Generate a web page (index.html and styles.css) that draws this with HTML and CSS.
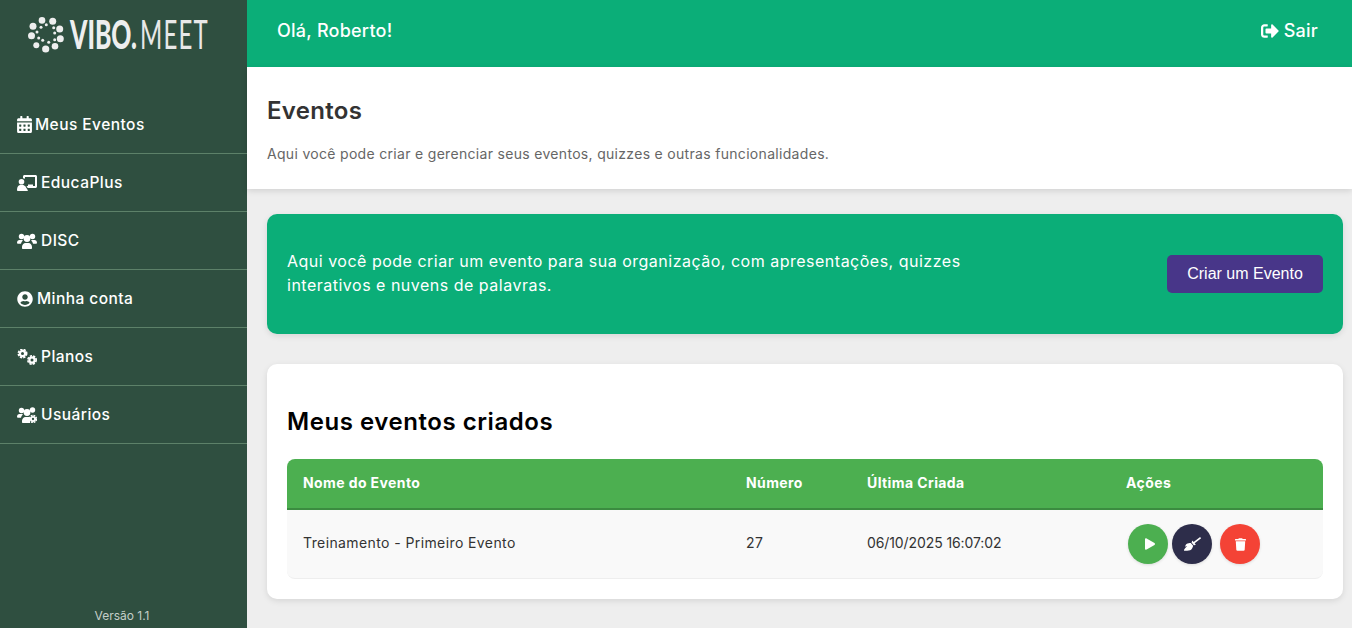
FILE: index.html
```html
<!DOCTYPE html>
<html lang="pt">
<head>
<meta charset="utf-8">
<title>Vibo Meet</title>
<link rel="stylesheet" href="styles.css">
</head>
<body>
<div class="app">
  <aside class="sidebar">
    <div class="logo">
      <svg class="logo-mark" viewBox="0 0 36 36" width="36" height="36" fill="#eeeeee">
        <circle cx="14" cy="3.400" r="3.300"/><circle cx="24.700" cy="4.300" r="3.500"/><circle cx="31.700" cy="12" r="3.500"/><circle cx="32.300" cy="21.700" r="3.500"/><circle cx="27" cy="29.300" r="3.300"/><circle cx="17.700" cy="32" r="3.600"/><circle cx="8.300" cy="28.300" r="3"/><circle cx="3.500" cy="18.700" r="3.500"/><circle cx="5" cy="9.300" r="3.500"/>
        <circle cx="18.300" cy="7.700" r="1.500"/><circle cx="25.700" cy="10.700" r="1.500"/><circle cx="26.700" cy="16" r="1.500"/><circle cx="26.700" cy="22.700" r="1.500"/><circle cx="20.700" cy="25.300" r="1.500"/><circle cx="14.700" cy="23.300" r="1.500"/><circle cx="10.700" cy="21" r="1.500"/><circle cx="9" cy="15" r="1.500"/><circle cx="13" cy="10.300" r="1.500"/>
      </svg>
      <svg class="logo-text" viewBox="0 0 142 36" width="142" height="36">
        <text class="logo-bold" transform="translate(0 32) scale(.62 1)">VIBO</text>
        <text class="logo-bold" transform="translate(61 32) scale(.62 1)">.</text>
        <text class="logo-thin" transform="translate(70 32) scale(.6 1)">MEET</text>
      </svg>
    </div>
    <nav class="menu">
      <a class="menu-item">
        <svg class="ico ico-cal" viewBox="0 0 448 512" width="15" height="17"><path d="M0 464c0 26.500 21.500 48 48 48h352c26.500 0 48-21.500 48-48V192H0v272zm320-196c0-6.600 5.400-12 12-12h40c6.600 0 12 5.400 12 12v40c0 6.600-5.400 12-12 12h-40c-6.600 0-12-5.400-12-12v-40zm0 128c0-6.600 5.400-12 12-12h40c6.600 0 12 5.400 12 12v40c0 6.600-5.400 12-12 12h-40c-6.600 0-12-5.400-12-12v-40zM192 268c0-6.600 5.400-12 12-12h40c6.600 0 12 5.400 12 12v40c0 6.600-5.400 12-12 12h-40c-6.600 0-12-5.400-12-12v-40zm0 128c0-6.600 5.400-12 12-12h40c6.600 0 12 5.400 12 12v40c0 6.600-5.400 12-12 12h-40c-6.600 0-12-5.400-12-12v-40zM64 268c0-6.600 5.400-12 12-12h40c6.600 0 12 5.400 12 12v40c0 6.600-5.400 12-12 12H76c-6.600 0-12-5.400-12-12v-40zm0 128c0-6.600 5.400-12 12-12h40c6.600 0 12 5.400 12 12v40c0 6.600-5.400 12-12 12H76c-6.600 0-12-5.400-12-12v-40zM400 64h-48V16c0-8.800-7.200-16-16-16h-32c-8.800 0-16 7.200-16 16v48H160V16c0-8.800-7.200-16-16-16h-32c-8.800 0-16 7.200-16 16v48H48C21.500 64 0 85.500 0 112v48h448v-48c0-26.500-21.500-48-48-48z"/></svg>
        <span>Meus Eventos</span>
      </a>
      <a class="menu-item">
        <svg class="ico" viewBox="0 0 20 16" width="20" height="16"><path d="M6 1.500C6 .7 6.700 0 7.500 0h11C19.300 0 20 .7 20 1.500v10c0 .8-.7 1.500-1.500 1.500H10.700l-1.200-2H11V9.500h5V11h2V2H8v1.700A4 4 0 0 0 6 3.200z"/><circle cx="4.500" cy="6.700" r="2.800"/><path d="M0 14.500c0-2.500 1.500-4.500 3.500-4.500h2c1.200 0 2.300.6 3 1.600l2.200 3.400c.3.500 0 1-.5 1H1c-.6 0-1-.5-1-1.500z"/></svg>
        <span>EducaPlus</span>
      </a>
      <a class="menu-item">
        <svg class="ico" viewBox="0 0 20 16" width="20" height="16"><circle cx="4.500" cy="3.500" r="2.700"/><circle cx="15.500" cy="3.500" r="2.700"/><circle cx="10" cy="5.500" r="3.400"/><path d="M0 10c0-1.800 1-3 2.500-3h2c.5 0 1 .2 1.400.4A5 5 0 0 0 4 10.800H1c-.6 0-1-.3-1-.8zM20 10c0-1.800-1-3-2.500-3h-2c-.5 0-1 .2-1.400.4a5 5 0 0 1 1.900 3.400h3c.6 0 1-.3 1-.8zM5 14c0-2.200 1.600-4 3.500-4h3c1.900 0 3.500 1.800 3.500 4v1c0 .6-.4 1-1 1H6c-.6 0-1-.4-1-1z"/></svg>
        <span>DISC</span>
      </a>
      <a class="menu-item">
        <svg class="ico" viewBox="0 0 496 512" width="16" height="16"><path d="M248 8C111 8 0 119 0 256s111 248 248 248 248-111 248-248S385 8 248 8zm0 96c48.600 0 88 39.400 88 88s-39.400 88-88 88-88-39.400-88-88 39.400-88 88-88zm0 344c-58.700 0-111.300-26.600-146.500-68.200 18.800-35.400 55.600-59.800 98.500-59.800 2.400 0 4.800.4 7.100 1.100 13 4.200 26.600 6.900 40.900 6.900 14.300 0 28-2.700 40.900-6.900 2.300-.7 4.700-1.100 7.100-1.100 42.900 0 79.700 24.400 98.500 59.800C359.300 421.400 306.700 448 248 448z"/></svg>
        <span>Minha conta</span>
      </a>
      <a class="menu-item">
        <svg class="ico" viewBox="0 0 20 16" width="20" height="16"><circle class="gear" cx="5.500" cy="4.500" r="2.600" stroke-width="2.200" fill="none"/><circle class="gear" cx="5.500" cy="4.500" r="4.200" stroke-width="1.600" fill="none" stroke-dasharray="2.300 1.100"/><circle class="gear" cx="15" cy="11" r="2.600" stroke-width="2.200" fill="none"/><circle class="gear" cx="15" cy="11" r="4.200" stroke-width="1.600" fill="none" stroke-dasharray="2.300 1.100"/></svg>
        <span>Planos</span>
      </a>
      <a class="menu-item">
        <svg class="ico" viewBox="0 0 20 16" width="20" height="16"><circle cx="4.500" cy="3.500" r="2.700"/><circle cx="15.500" cy="3" r="2.700"/><circle cx="10" cy="5.500" r="3.400"/><path d="M0 10c0-1.800 1-3 2.500-3h2c.5 0 1 .2 1.400.4A5 5 0 0 0 4 10.800H1c-.6 0-1-.3-1-.8zM5 14c0-2.200 1.600-4 3.500-4h3c.6 0 1 .1 1.500.3V16H6c-.6 0-1-.4-1-1z"/><circle class="gear" cx="16" cy="12" r="2.100" stroke-width="1.900" fill="none"/><circle class="gear" cx="16" cy="12" r="3.500" stroke-width="1.400" fill="none" stroke-dasharray="1.900 .85"/></svg>
        <span>Usuários</span>
      </a>
    </nav>
    <div class="version">Versão 1.1</div>
  </aside>
  <div class="content">
    <header class="topbar">
      <div class="greeting">Olá, Roberto!</div>
      <a class="logout">
        <svg viewBox="0 0 512 512" width="18" height="18" class="ico"><path d="M497 273L329 441c-15 15-41 4.500-41-17v-96H152c-13.300 0-24-10.700-24-24v-96c0-13.300 10.700-24 24-24h136V88c0-21.400 25.900-32 41-17l168 168c9.300 9.400 9.300 24.600 0 34zM192 436v-40c0-6.600-5.400-12-12-12H96c-17.700 0-32-14.300-32-32V160c0-17.700 14.300-32 32-32h84c6.600 0 12-5.400 12-12V76c0-6.600-5.400-12-12-12H96c-53 0-96 43-96 96v192c0 53 43 96 96 96h84c6.600 0 12-5.400 12-12z"/></svg>
        <span>Sair</span>
      </a>
    </header>
    <section class="page-head">
      <h1>Eventos</h1>
      <p>Aqui você pode criar e gerenciar seus eventos, quizzes e outras funcionalidades.</p>
    </section>
    <main class="main">
      <section class="banner">
        <p>Aqui você pode criar um evento para sua organização, com apresentações, quizzes interativos e nuvens de palavras.</p>
        <button class="cta">Criar um Evento</button>
      </section>
      <section class="card">
        <h2>Meus eventos criados</h2>
        <div class="table">
          <div class="row row-head">
            <div>Nome do Evento</div><div>Número</div><div>Última Criada</div><div>Ações</div>
          </div>
          <div class="row row-body">
            <div class="cell">Treinamento - Primeiro Evento</div><div class="cell">27</div><div class="cell cell-date">06/10/2025 16:07:02</div>
            <div class="actions">
              <button class="round play"><svg viewBox="0 0 448 512" width="10" height="12"><path d="M424.400 214.700L72.400 6.600C43.800-10.300 0 6.100 0 47.900V464c0 37.500 40.700 60.100 72.400 41.300l352-208c31.400-18.500 31.500-64.100 0-82.600z"/></svg></button>
              <button class="round brush"><svg viewBox="0 0 640 512" width="17" height="14"><path d="M256.470 216.770l86.730 109.180s-16.600 102.360-76.570 150.120C206.660 523.850 0 510.190 0 510.190s3.800-23.140 11-55.430l94.620-112.170c3.970-4.700-.87-11.620-6.650-9.500l-60.400 22.090c14.440-41.660 32.720-80.040 54.600-97.470 59.970-47.760 163.300-40.940 163.300-40.940zM636.530 31.030l-19.860-25c-5.490-6.900-15.520-8.050-22.410-2.560l-232.480 177.800-34.140-42.970c-5.090-6.410-15.140-5.210-18.590 2.210l-25.330 54.550 86.730 109.180 58.800-12.450c8-1.690 11.420-11.200 6.340-17.600l-34.090-42.920 232.480-177.800c6.890-5.480 8.040-15.530 2.550-22.440z"/></svg></button>
              <button class="round trash"><svg viewBox="0 0 448 512" width="11" height="13"><path d="M432 32H312l-9.400-18.700A24 24 0 0 0 281.100 0H166.800a23.700 23.700 0 0 0-21.400 13.300L136 32H16A16 16 0 0 0 0 48v32a16 16 0 0 0 16 16h416a16 16 0 0 0 16-16V48a16 16 0 0 0-16-16zM53.200 467a48 48 0 0 0 47.900 45h245.800a48 48 0 0 0 47.900-45L416 128H32z"/></svg></button>
            </div>
          </div>
        </div>
      </section>
    </main>
  </div>
</div>
</body>
</html>
```
FILE: styles.css
```css
* { box-sizing: border-box; }
html, body { margin: 0; height: 100%; }
body {
  font-family: "Inter", "Open Sans", sans-serif;
  background: #eeeeee;
  color: #333;
  overflow: hidden;
}
.app { display: flex; height: 628px; }
.sidebar {
  width: 247px;
  flex: none;
  background: #2f4f40;
  color: #fff;
  display: flex;
  flex-direction: column;
}
.logo {
  height: 96px;
  padding: 17px 0 0 28px;
  display: flex;
  align-items: flex-start;
  gap: 6px;
}
.logo-text { overflow: visible; }
.logo-bold { font: 900 40px "Lato", sans-serif; fill: #eeeeee; }
.logo-thin { font: 400 40px "Lato", sans-serif; letter-spacing: 2px; fill: #e8e8e8; }
.menu { display: flex; flex-direction: column; }
.menu-item {
  height: 58px;
  padding: 0 17px;
  display: flex;
  align-items: center;
  gap: 4px;
  font-size: 15.500px;
  font-weight: 450;
  letter-spacing: .45px;
  border-bottom: 1px solid #5d8169;
}
.ico { fill: currentColor; flex: none; }
.ico-cal { margin-right: -1px; }
.gear { stroke: #fff; }
.version {
  margin-top: auto;
  padding-bottom: 5px;
  padding-right: 3px;
  text-align: center;
  font-size: 12px;
  color: #c4cec8;
}
.content { flex: 1; display: flex; flex-direction: column; min-width: 0; }
.topbar {
  height: 67px;
  background: #0bae78;
  color: #fff;
  display: flex;
  align-items: center;
  justify-content: space-between;
  padding: 0 34px 6px 30px;
  font-size: 18px;
  font-weight: 450;
  letter-spacing: .25px;
}
.logout { display: flex; align-items: center; gap: 5px; }
.page-head {
  height: 122px;
  background: #fff;
  padding: 28px 20px 0;
  box-shadow: 0 2px 6px rgba(0,0,0,.12);
}
.page-head h1 { margin: 0; font-size: 24px; font-weight: 600; color: #333; line-height: 32px; letter-spacing: .3px; }
.page-head p { margin: 17px 0 0; font-size: 14px; color: #666; line-height: 20px; letter-spacing: .31px; }
.main { padding: 25px 9px 0 20px; display: flex; flex-direction: column; gap: 30px; }
.banner {
  height: 120px;
  background: #0bae78;
  border-radius: 10px;
  padding: 0 20px;
  display: flex;
  align-items: center;
  justify-content: space-between;
  color: #fff;
  box-shadow: 0 2px 6px rgba(0,0,0,.1);
}
.banner p { margin: 0 0 3px; width: 700px; font-size: 16px; font-weight: 400; line-height: 24px; letter-spacing: .5px; }
.cta {
  width: 156px;
  height: 38px;
  border: 0;
  border-radius: 5px;
  background: #483689;
  color: #fff;
  font: 400 16px "Liberation Sans", sans-serif;
}
.card {
  height: 235px;
  background: #fff;
  border-radius: 10px;
  padding: 40px 20px 0;
  box-shadow: 0 2px 6px rgba(0,0,0,.1);
}
.card h2 { margin: 0; font-size: 24px; font-weight: 600; color: #000; line-height: 36px; letter-spacing: .55px; }
.table { margin-top: 19px; }
.row { display: grid; grid-template-columns: 443px 121px 259px 1fr; align-items: center; padding-left: 16px; font-size: 14px; letter-spacing: .4px; }
.row-head {
  height: 51px;
  padding-bottom: 2px;
  background: #4caf50;
  color: #fff;
  font-weight: 700;
  border-radius: 8px 8px 0 0;
  border-bottom: 2px solid #3b8c40;
}
.row-body {
  height: 69px;
  background: #f9f9f9;
  border-bottom: 1px solid #eee;
  border-radius: 0 0 8px 8px;
  color: #333;
}
.cell { margin-bottom: 4px; }
.cell-date { letter-spacing: -.1px; }
.actions { display: flex; margin-left: 2px; }
.round {
  width: 40px;
  height: 40px;
  border: 0;
  border-radius: 50%;
  padding: 0;
  display: flex;
  align-items: center;
  justify-content: center;
  box-shadow: 0 1px 3px rgba(0,0,0,.12);
}
.round svg { fill: #fff; }
.play { background: #4caf50; margin-right: 4px; padding-left: 3px; }
.brush { background: #2d2d4a; margin-right: 8px; }
.trash { background: #f44336; }
```
